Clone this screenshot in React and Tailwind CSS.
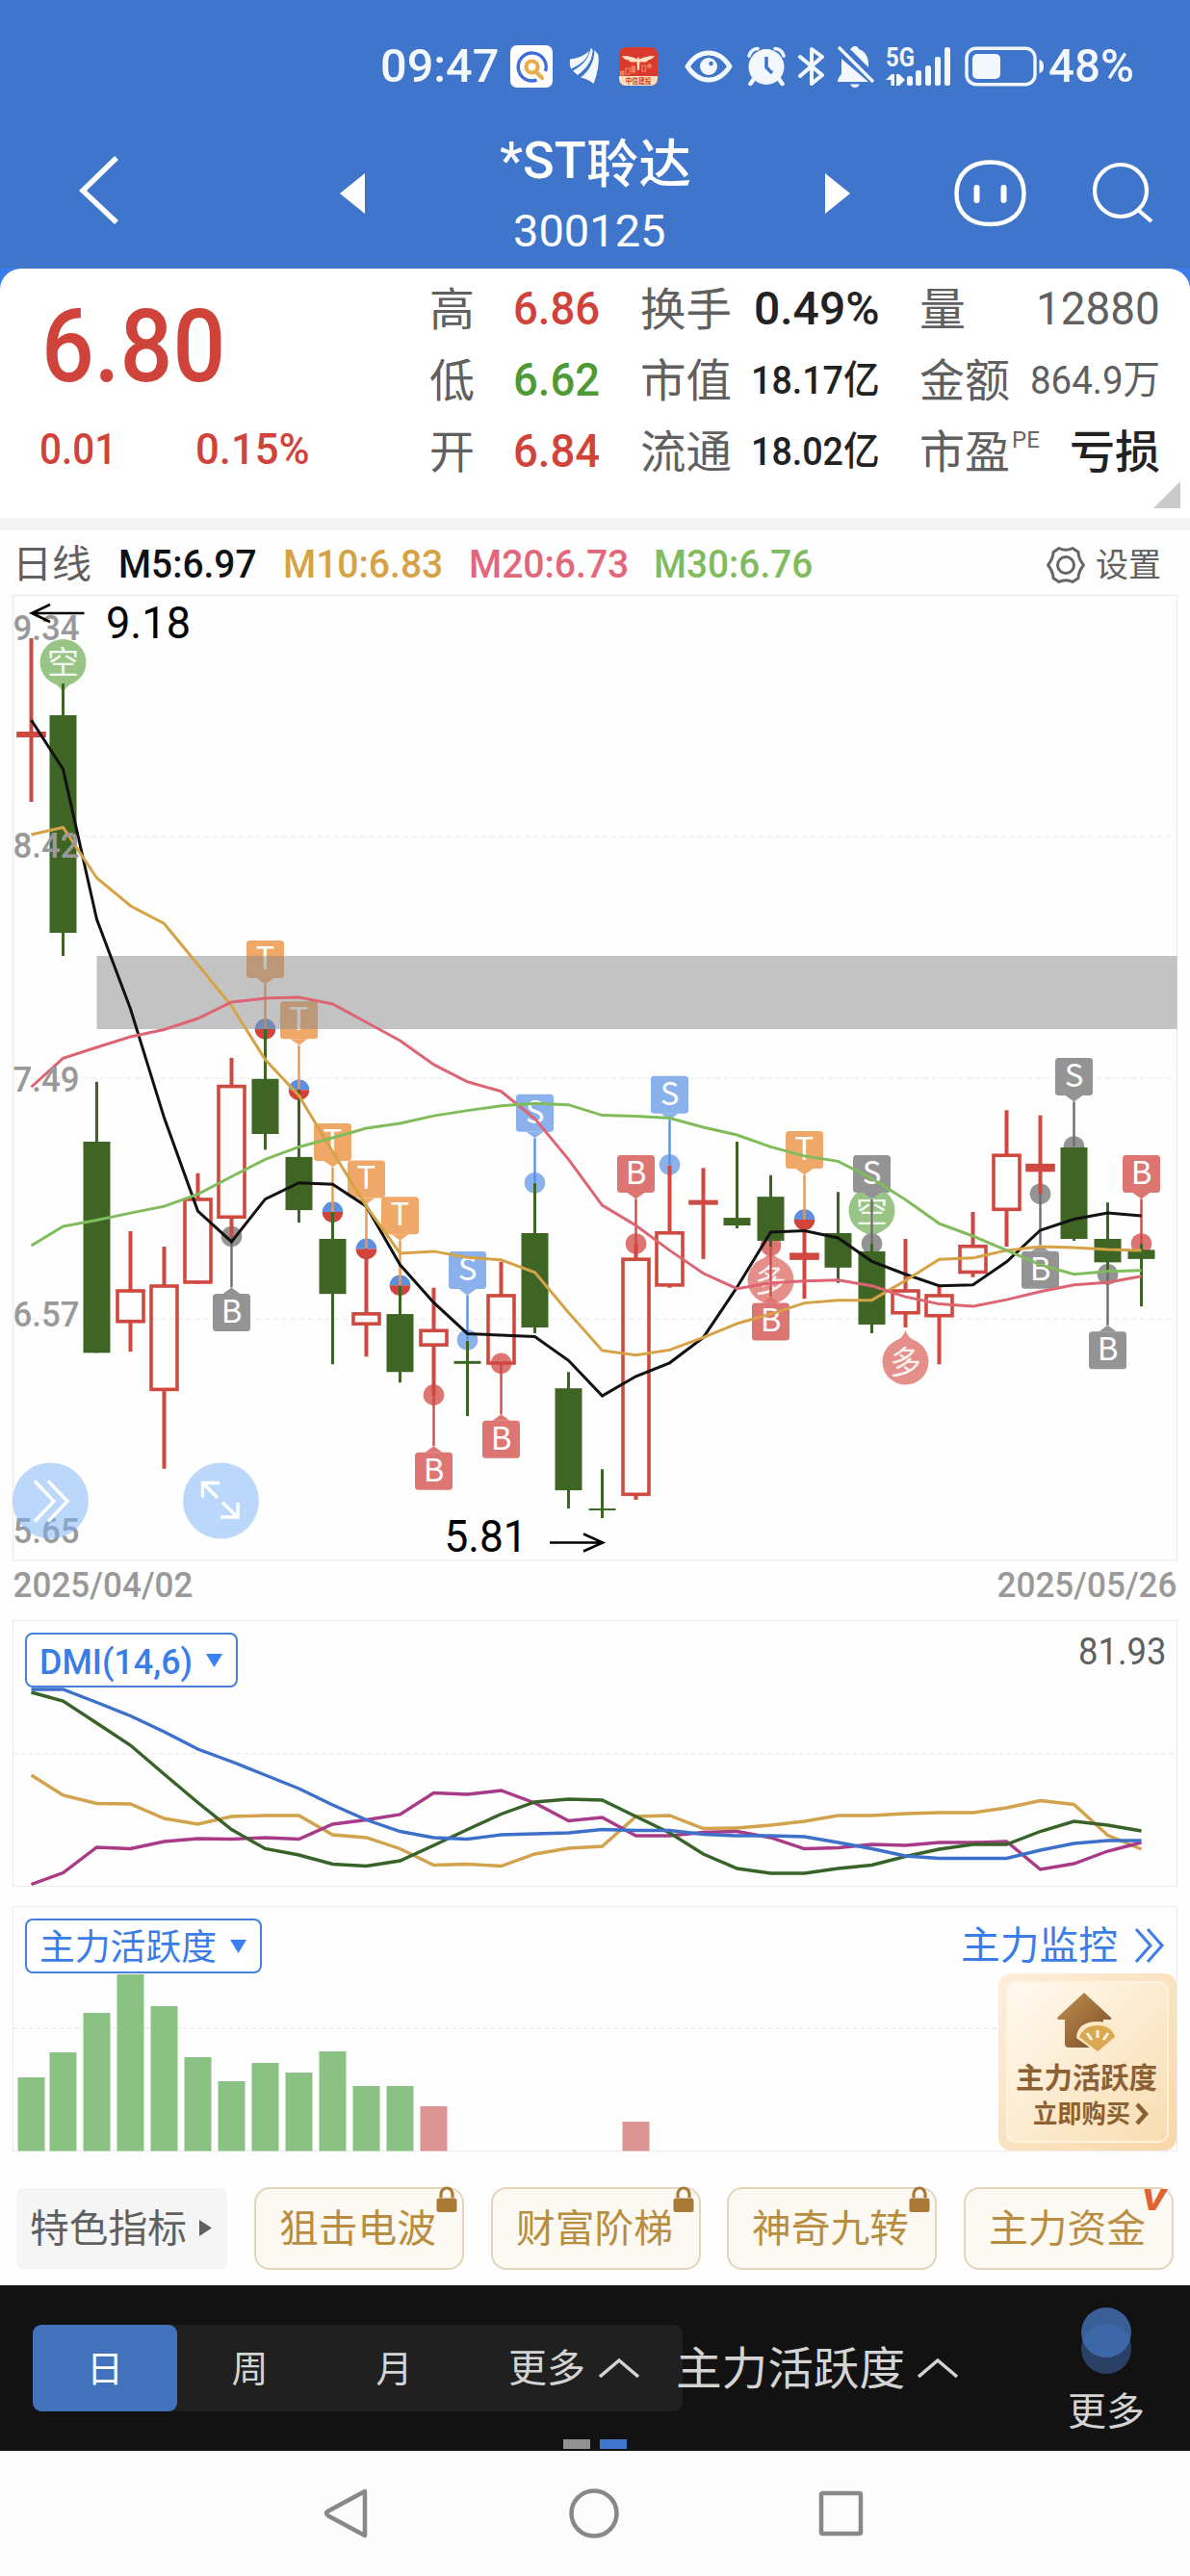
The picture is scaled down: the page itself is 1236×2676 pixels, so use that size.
import React, { useLayoutEffect, useRef, useState } from "react";

const FONT = "font-['Roboto','Noto_Sans_CJK_SC',sans-serif]";

// Text squeezed or stretched horizontally to an exact advance width.
function Fit({ w, className = "", children }) {
  const ref = useRef(null);
  const [k, setK] = useState(1);
  useLayoutEffect(() => {
    const measure = () => ref.current && setK(w / ref.current.offsetWidth);
    measure();
    document.fonts?.ready.then(measure);
  }, [w, children]);
  return (
    <span className={`inline-block shrink-0 whitespace-nowrap text-left leading-none ${className}`} style={{ width: w }}>
      <span ref={ref} className="inline-block origin-left" style={{ transform: `scaleX(${k})` }}>
        {children}
      </span>
    </span>
  );
}

/* ---------- status bar ---------- */

function StatusBar() {
  return (
    <div className="flex h-[137px] items-center pl-[395px] text-[#f3f8ff]">
      <Fit w={123} className="text-[49px] font-medium">09:47</Fit>
      <svg className="ml-[12px] shrink-0" width="44" height="44" viewBox="0 0 44 44">
        <rect width="44" height="44" rx="7" fill="#fff" />
        <path d="M36.5 27 A14.5 14.5 0 1 0 27.5 36.2" fill="none" stroke="#3f6bdc" strokeWidth="3.4" />
        <circle cx="22.5" cy="22.5" r="6" fill="none" stroke="#e8ac4d" strokeWidth="4.2" />
        <path d="M26 27 L33 34" stroke="#e8ac4d" strokeWidth="4.2" strokeLinecap="round" />
      </svg>
      <svg className="ml-[17px] shrink-0" width="33" height="38" viewBox="0 0 33 38" fill="currentColor">
        <path d="M1 11.5 Q13 10.5 21 3 Q19 14 2 21.500 Q0 16 1 11.500 Z" />
        <path d="M22.500 0.500 L24.500 1 Q25 16 9 28 L4 23.500 Q20 15 22.500 0.500 Z" />
        <path d="M26.500 2 L30.500 7 Q32 20 25.500 37 Q20 32 12 30.500 Q26 20 26.500 2 Z" />
      </svg>
      <svg className="ml-[19px] shrink-0" width="40" height="40" viewBox="0 0 40 40">
        <rect width="40" height="40" rx="7" fill="#da3a2c" />
        <path d="M0 30 H40 V33 A7 7 0 0 1 33 40 H7 A7 7 0 0 1 0 33 Z" fill="#f8dfc0" />
        <path d="M3 9 Q14 9 18.500 12.500 L20 10 L21.500 12.500 Q27 9 37 9 Q34 13 30 13.500 Q29 16.500 21.500 15 L20.800 24 H19.200 L18.500 15 Q11 16.500 10 13.500 Q5 13 3 9 Z" fill="#fbe3c3" />
        <g fill="none" stroke="#ee7f62" strokeWidth="1.200"><rect x="7" y="22" width="4" height="6" /><rect x="13" y="20" width="3.500" height="6" fill="#ee7f62" /><rect x="24" y="19" width="3.500" height="6" /><rect x="1.500" y="25" width="3.500" height="4" fill="#ee7f62" /><rect x="30" y="18" width="3" height="3" fill="#ee7f62" /></g>
        <text x="6.500" y="37.500" fontSize="7.500" fontWeight="700" fill="#c8432f" textLength="27" lengthAdjust="spacingAndGlyphs">中信建投</text>
      </svg>
      <svg className="ml-[28px] shrink-0" width="50" height="34" viewBox="0 0 50 34">
        <path d="M3 17 Q12 3 25 3 Q38 3 47 17 Q38 31 25 31 Q12 31 3 17 Z" fill="none" stroke="currentColor" strokeWidth="5" strokeLinejoin="round" />
        <circle cx="25" cy="17" r="9" fill="currentColor" /><circle cx="27.5" cy="14" r="2.2" fill="#3f76cb" />
      </svg>
      <svg className="ml-[14px] shrink-0" width="42" height="42" viewBox="0 0 42 42">
        <circle cx="21" cy="21.500" r="18.500" fill="currentColor" />
        <path d="M3 10 Q5 3 12 2.500 M39 10 Q37 3 30 2.500" fill="none" stroke="currentColor" strokeWidth="3.500" strokeLinecap="round" />
        <path d="M8 34 L4.500 39 M34 34 L37.500 39" stroke="currentColor" strokeWidth="4.500" strokeLinecap="round" />
        <path d="M21 11 V22 L27 28" fill="none" stroke="#3f76cb" strokeWidth="3.600" />
      </svg>
      <svg className="ml-[12px] shrink-0" width="28" height="42" viewBox="0 0 28 42">
        <path d="M2 11 L25 30 L14 39 V3 L25 11 L2 31" fill="none" stroke="currentColor" strokeWidth="4" strokeLinejoin="round" strokeLinecap="round" />
      </svg>
      <svg className="ml-[11px] shrink-0" width="42" height="44" viewBox="0 0 42 44">
        <path d="M15 5 Q17 1 20 1 Q23 1 24 4 Q33 7 34 18 V23 L16 5 Z M6 14 L34 38 H2 Q2 34 6 30 Z" fill="currentColor" />
        <path d="M15 40.500 H25 Q23 44 20 44 Q17 44 15 40.500 Z" fill="currentColor" />
        <path d="M3 2 L39 38" stroke="currentColor" strokeWidth="3.200" />
      </svg>
      <svg className="ml-[9px] shrink-0 overflow-visible" width="69" height="42" viewBox="0 0 69 42" fill="currentColor">
        <text x="1" y="20.500" fontSize="27" fontWeight="700" textLength="30" lengthAdjust="spacingAndGlyphs">5G</text>
        <path d="M7 29 H10 V41 H6.500 V35 H1 Z M12 29 H15 L21 35 L15 41 H12 Z" />
        {[[23, 31, 10], [32, 25, 16], [42, 20, 21], [52, 11, 30], [62, 1, 40]].map(([x, y, h]) => (
          <rect key={x} x={x} y={y} width="6" height={h} rx="2.500" />
        ))}
      </svg>
      <svg className="ml-[14px] shrink-0" width="84" height="42" viewBox="0 0 84 42" fill="currentColor">
        <rect x="2" y="2.200" width="71" height="37.500" rx="10" fill="none" stroke="currentColor" strokeWidth="3.400" />
        <rect x="8" y="8" width="29" height="26" rx="5" />
        <path d="M77.500 14 Q82 15 82 21 Q82 27 77.500 28 Z" />
      </svg>
      <Fit w={89} className="ml-[3px] text-[49px] font-medium">48%</Fit>
    </div>
  );
}

function TitleBar() {
  return (
    <div className="flex h-[142px] items-start text-white">
      <svg className="ml-[80px] mt-[24px] shrink-0" width="45" height="72" viewBox="0 0 45 72">
        <path d="M41 3 L6 37 L41 70" fill="none" stroke="#fff" strokeWidth="5.500" />
      </svg>
      <svg className="ml-[228px] mt-[43px] shrink-0" width="26" height="42" viewBox="0 0 26 42"><path d="M26 0 V42 L0 21 Z" fill="#fff" /></svg>
      <div className="ml-[137px] flex w-[208px] flex-col items-start">
        <div className="mt-[2px] flex h-[56px] items-center text-[54px] font-medium">
          <Fit w={90} className="ml-[3px]">*ST</Fit>
          <Fit w={109} className="font-['Noto_Sans_CJK_SC']">聆达</Fit>
        </div>
        <div className="mt-[20px] flex h-[48px] items-center pl-[17px] text-[47px]">
          <Fit w={159}>300125</Fit>
        </div>
      </div>
      <svg className="ml-[133px] mt-[43px] shrink-0" width="26" height="42" viewBox="0 0 26 42"><path d="M0 0 V42 L26 21 Z" fill="#fff" /></svg>
      <svg className="ml-[107px] mt-[28px] shrink-0" width="77" height="72" viewBox="0 0 77 72">
        <path d="M38.500 3.500 C60 3.500 73.500 16 73.500 36 C73.500 56 60 68 38.500 68 C17 68 3.500 56 3.500 36 C3.500 16 17 3.500 38.500 3.500 Z" fill="none" stroke="#fff" strokeWidth="4.500" />
        <path d="M24.500 30 V43 M52.500 30 V43" stroke="#fff" strokeWidth="6" strokeLinecap="round" />
      </svg>
      <svg className="ml-[68px] mt-[30px] shrink-0" width="66" height="68" viewBox="0 0 66 68">
        <circle cx="29" cy="31" r="27" fill="none" stroke="#fff" strokeWidth="4.200" />
        <path d="M47 51 L61 63" stroke="#fff" strokeWidth="4.200" />
      </svg>
    </div>
  );
}

/* ---------- quote ---------- */

const RED = "text-[#d0433b]";
const ROWS = [
  { a: "高", av: "6.86", ac: RED, b: "换手", bv: "0.49%", bs: "text-[48px]", bw: 131, c: "量", cw: 48, cv: "12880", cs: "text-[48px] font-normal text-[#606060]", cvw: 129 },
  { a: "低", av: "6.62", ac: "text-[#4f9a35]", b: "市值", bv: "18.17亿", bs: "text-[41px]", bw: 134, c: "金额", cw: 94, cv: "864.9万", cs: "text-[41px] font-normal text-[#606060]", cvw: 135 },
  { a: "开", av: "6.84", ac: RED, b: "流通", bv: "18.02亿", bs: "text-[41px]", bw: 134, c: "市盈", cw: 94, pe: true, cv: "亏损", cs: "text-[47px] text-[#222]", cvw: 94 },
];

function Quote() {
  return (
    <section className="bg-[#3a7bf0]">
      <div className="relative flex h-[259px] rounded-t-[22px] bg-white">
        <div className={`w-[446px] ${RED}`}>
          <div className="mt-[44px] flex h-[74px] items-center pl-[43px] text-[105px] font-medium">
            <Fit w={191}>6.80</Fit>
          </div>
          <div className="mt-[52px] flex h-[36px] items-center pl-[41px] text-[44px] font-medium">
            <Fit w={80}>0.01</Fit>
            <Fit w={119} className="ml-[82px]">0.15%</Fit>
          </div>
        </div>
        <div className="mt-[5px] flex flex-1 flex-col">
          {ROWS.map((r) => (
            <div key={r.a} className="flex h-[74px] items-center pr-[31px] text-[47px] font-medium text-[#222]">
              <Fit w={47} className="font-normal text-[#606060]">{r.a}</Fit>
              <Fit w={90} className={`ml-[40px] text-[48px] ${r.ac}`}>{r.av}</Fit>
              <Fit w={95} className="ml-[42px] font-normal text-[#606060]">{r.b}</Fit>
              <div className="flex w-[154px] justify-end"><Fit w={r.bw} className={r.bs}>{r.bv}</Fit></div>
              <Fit w={r.cw} className="ml-[41px] font-normal text-[#606060]">{r.c}</Fit>
              {r.pe && <Fit w={29} className="mb-[24px] ml-[2px] text-[24px] font-normal text-[#666]">PE</Fit>}
              <div className="flex flex-1 justify-end"><Fit w={r.cvw} className={r.cs}>{r.cv}</Fit></div>
            </div>
          ))}
        </div>
        <svg className="absolute bottom-[10px] right-[10px]" width="28" height="28" viewBox="0 0 28 28"><path d="M28 0 V28 H0 Z" fill="#cacaca" /></svg>
      </div>
    </section>
  );
}

function Legend() {
  return (
    <div className="flex h-[61px] items-center pt-[10px] text-[40px] font-medium">
      <Fit w={82} className="ml-[13px] text-[40px] font-normal text-[#606060]">日线</Fit>
      <Fit w={144} className="ml-[28px] text-[#111]">M5:6.97</Fit>
      <Fit w={166} className="ml-[27px] text-[#d6a246]">M10:6.83</Fit>
      <Fit w={166} className="ml-[27px] text-[#e0687a]">M20:6.73</Fit>
      <Fit w={165} className="ml-[26px] text-[#82bb5e]">M30:6.76</Fit>
      <svg className="ml-[242px] shrink-0" width="42" height="42" viewBox="0 0 42 42" fill="none" stroke="#666" strokeWidth="3">
        <path d="M14 3.500 Q21 7 28 3.500 L34 7.500 Q34 14 39.500 21 Q34 28 34 34.500 L28 38.500 Q21 35 14 38.500 L8 34.500 Q8 28 2.500 21 Q8 14 8 7.500 Z" strokeLinejoin="round" />
        <circle cx="21" cy="21" r="8.500" />
      </svg>
      <Fit w={68} className="ml-[10px] text-[34px] font-normal text-[#606060]">设置</Fit>
    </div>
  );
}

/* ---------- candlestick chart ---------- */

const px = (i) => (i === 0 ? 32.5 : 30.5 + 35 * i);
const py = (y) => (y > 1080 ? 1080 + (y - 1080) * 0.995 : y);
const line = (ys) => ys.map((y, i) => `${px(i)},${y}`).join(" ");
const priceLine = (ys) => line(ys.map(py));

// [kind, high, bodyTop, bodyBottom, low]; r = hollow red, R = flat red, g = filled green
const CANDLES = [
  ["R", 663, 760, 766, 833], ["g", 710, 743, 969, 993], ["g", 1124, 1186.5, 1407, 1407], ["r", 1280, 1340.5, 1376, 1406],
  ["r", 1296, 1335.5, 1447, 1528], ["r", 1219.5, 1245, 1335, 1335], ["r", 1099, 1127, 1267, 1286], ["g", 1069, 1121, 1178.5, 1195],
  ["g", 1132, 1202.5, 1258, 1271], ["g", 1260, 1288, 1345.5, 1419], ["r", 1298, 1364.5, 1378.5, 1411], ["g", 1337, 1366.5, 1427, 1438],
  ["r", 1339, 1382, 1400.5, 1451.5], ["g", 1394.5, 1415.5, 1418.5, 1473], ["r", 1312, 1345.5, 1419.5, 1419.5], ["g", 1230, 1282, 1380.5, 1386.5],
  ["g", 1427, 1444, 1550.5, 1569.5], ["g", 1528.5, 1569.5, 1571.5, 1579.5], ["r", 1293, 1307.5, 1556.5, 1560.5], ["r", 1211.5, 1280, 1338, 1339],
  ["R", 1214, 1247.5, 1252.5, 1309], ["g", 1186.5, 1266, 1274, 1277], ["g", 1221.5, 1244, 1290, 1296], ["R", 1268, 1302.5, 1310, 1350.5],
  ["g", 1239, 1282, 1318, 1334], ["g", 1293, 1301, 1377.5, 1386.5], ["r", 1288, 1340.5, 1367, 1380.5], ["r", 1338, 1345.5, 1370, 1419],
  ["r", 1260, 1294, 1324.5, 1328], ["r", 1153.5, 1199, 1259, 1296], ["R", 1159, 1209.5, 1218, 1241], ["g", 1192.5, 1192.5, 1288, 1290],
  ["g", 1250, 1288, 1312.5, 1324.5], ["g", 1293, 1299.5, 1309, 1358.5],
];

const M5 = [748, 799, 955, 1048, 1161.5, 1259, 1291, 1246.5, 1229.5, 1231, 1254, 1315, 1354.5, 1387, 1388.5, 1390, 1415, 1452, 1431.5, 1417.5, 1391, 1338.5, 1281, 1279.5, 1287, 1311.5, 1325, 1337, 1336, 1312, 1279, 1267.5, 1261, 1264];
const M10 = [867, 859.5, 912, 941, 959.5, 1002, 1045, 1101, 1138.5, 1197, 1254, 1303, 1301, 1307.5, 1310, 1323, 1365, 1404.5, 1409.5, 1404, 1391, 1376.5, 1366.5, 1355, 1352, 1352, 1331.5, 1309.5, 1308, 1300, 1296, 1297, 1299, 1300];
const M20 = [1129.5, 1099.5, 1088, 1077, 1069.5, 1058, 1041, 1037, 1036, 1043, 1062, 1081, 1106, 1124, 1134, 1162.5, 1205, 1253, 1274, 1300, 1324, 1340, 1334, 1332, 1331, 1337, 1348.5, 1356, 1358.5, 1351.5, 1343, 1336, 1333.5, 1327];
const M30 = [1295, 1275, 1268.5, 1261, 1254, 1241.5, 1223, 1205, 1192, 1182.5, 1172.5, 1167.5, 1159.5, 1154, 1149, 1146.5, 1148, 1159, 1160, 1162, 1171.5, 1179.5, 1192, 1201.5, 1207, 1225, 1247, 1272, 1285, 1300, 1315, 1325, 1322, 1321];

const TONE = {
  orange: ["#f0a868", "#e39a5b"],
  blue: ["#8ab1ec", "#5a91e3"],
  red: ["#dd7673", "#cb4c46"],
  gray: ["#949494", "#6c6c6c"],
};

// [index, letter, tone, dotY, above]
const MARKS = [
  [6, "B", "gray", 1285.5, false], [7, "T", "orange", 1069, true], [8, "T", "orange", 1132.5, true], [9, "T", "orange", 1260, true],
  [10, "T", "orange", 1298.5, true], [11, "T", "orange", 1336.5, true], [12, "B", "red", 1451, false], [13, "S", "blue", 1393.5, true],
  [14, "B", "red", 1418, false], [15, "S", "blue", 1229.5, true], [18, "B", "red", 1293, true], [19, "S", "blue", 1210.5, true],
  [22, "B", "red", 1295, false], [23, "T", "orange", 1268, true], [25, "S", "gray", 1293, true], [30, "B", "gray", 1241, false],
  [31, "S", "gray", 1191.5, true], [32, "B", "gray", 1325, false], [33, "B", "red", 1293, true],
];

function Mark({ i, letter, tone, y, above }) {
  const x = px(i);
  const [fill, stem] = TONE[tone];
  const top = above ? y - 92 : y + 59.5;
  const edge = above ? top + 39 : top;
  const tip = above ? edge + 6.5 : edge - 6.5;
  return (
    <g>
      {letter === "T" ? (
        <>
          <path d={`M${x - 10.8} ${y} A10.800 10.800 0 0 1 ${x + 10.8} ${y} Z`} fill="#5c8fe0" />
          <path d={`M${x - 10.8} ${y} A10.800 10.800 0 0 0 ${x + 10.8} ${y} Z`} fill="#d2433b" />
        </>
      ) : (
        <circle cx={x} cy={y} r="10.800" fill={fill} />
      )}
      <path d={`M${x} ${y} V${tip}`} stroke={stem} strokeWidth="2.400" />
      <rect x={x - 19.5} y={top} width="39" height="39" rx="3.500" fill={fill} />
      <path d={`M${x - 9} ${edge} H${x + 9} L${x} ${tip} Z`} fill={fill} />
      <text x={x} y={top + 30} fontSize="33" fill="#fff" textAnchor="middle" className="font-['Noto_Sans_CJK_SC']">{letter}</text>
    </g>
  );
}

function Drop({ x, y, fill, tail, char }) {
  const s = tail === "down" ? 1 : -1;
  return (
    <g>
      <circle cx={x} cy={y} r="24" fill={fill} />
      <path d={`M${x - 11} ${y + s * 21} Q${x - 2} ${y + s * 25} ${x} ${y + s * 33} Q${x + 2} ${y + s * 25} ${x + 11} ${y + s * 21} Z`} fill={fill} />
      <text x={x} y={y + 12} fontSize="33" fill="#fff" fillOpacity=".9" textAnchor="middle" className="font-['Noto_Sans_CJK_SC']">{char}</text>
    </g>
  );
}

function Candle({ i, d: [kind, ...levels] }) {
  const x = px(i);
  const [hi, top, bottom, lo] = levels.map(py);
  if (kind === "g")
    return (
      <g fill="#3e6523">
        <rect x={x - 1.5} y={hi} width="3" height={lo - hi} />
        <rect x={x - 14} y={top} width="28" height={bottom - top} />
      </g>
    );
  if (kind === "R")
    return (
      <g fill="#cf4940">
        <rect x={x - 2} y={hi} width="4" height={lo - hi} />
        <rect x={x - 15.3} y={top} width="30.600" height={bottom - top} />
      </g>
    );
  return (
    <g>
      <path d={`M${x} ${hi} V${top + 2} M${x} ${bottom - 2} V${lo}`} stroke="#cf4940" strokeWidth="4" />
      <rect x={x - 13.5} y={top + 1.8} width="27" height={bottom - top - 3.6} fill="none" stroke="#cf4940" strokeWidth="3.600" />
    </g>
  );
}

function AxisLabel({ x = 13.5, y, w = 69, children }) {
  return <text x={x} y={y} fontSize="37" fontWeight="500" fill="#999" textLength={w} lengthAdjust="spacingAndGlyphs">{children}</text>;
}

function KLine() {
  return (
    <svg className="block" width="1236" height="1064" viewBox="0 612 1236 1064">
      <rect x="13.500" y="618.500" width="1209" height="1002.500" fill="none" stroke="#ebebeb" strokeWidth="1.200" />
      {[869, 1120, 1370.5].map((y) => (
        <path key={y} d={`M14 ${y} H1222`} stroke="#f0f0f0" strokeWidth="1.500" strokeDasharray="5 4" />
      ))}
      <Drop x={65.5} y={688} fill="#98c585" tail="down" char="空" />
      <Drop x={905.5} y={1257.5} fill="#98c585" tail="down" char="空" />
      <Drop x={800.5} y={1330} fill="#e58f8b" tail="up" char="多" />
      <Drop x={940.5} y={1414.5} fill="#e58f8b" tail="up" char="多" />
      {MARKS.map(([i, letter, tone, y, above]) => <Mark key={i} i={i} letter={letter} tone={tone} y={py(y)} above={above} />)}
      {CANDLES.map((d, i) => <Candle key={i} i={i} d={d} />)}
      <rect x="100.500" y="993" width="1122" height="76" fill="#888" fillOpacity=".5" />
      <g fill="none" strokeWidth="3">
        <polyline points={priceLine(M5)} stroke="#111" />
        <polyline points={priceLine(M10)} stroke="#d6a246" />
        <polyline points={priceLine(M20)} stroke="#dd6573" />
        <polyline points={priceLine(M30)} stroke="#80bb5c" />
      </g>
      <AxisLabel y={664.5}>9.34</AxisLabel>
      <AxisLabel y={890.5}>8.42</AxisLabel>
      <AxisLabel y={1133.5}>7.49</AxisLabel>
      <AxisLabel y={1377.5}>6.57</AxisLabel>
      <AxisLabel y={1603}>5.65</AxisLabel>
      <g fill="none" stroke="#000" strokeWidth="2.600">
        <path d="M33 637 H87.500 M52 628 L33 637 L52 646" />
        <path d="M571 1602.500 H626 M606 1593.500 L626 1602.500 L606 1611.500" />
      </g>
      <g fontSize="46" fill="#000">
        <text x="110" y="662.500" textLength="88" lengthAdjust="spacingAndGlyphs">9.18</text>
        <text x="461.500" y="1611.500" textLength="86" lengthAdjust="spacingAndGlyphs">5.81</text>
      </g>
      <g fill="#78b1f7" fillOpacity=".5">
        <circle cx="52.500" cy="1559" r="39.500" />
        <circle cx="229.500" cy="1559" r="39.500" />
      </g>
      <g fill="none" stroke="#fff" strokeWidth="3.400">
        <path d="M36 1538.500 L56 1559.500 L36 1580.500 M50 1538.500 L70 1559.500 L50 1580.500" />
        <path d="M210.500 1555.500 V1540.500 H228 M211 1541 L226 1556 M247 1561 V1576 H229 M246 1575.500 L231 1560.500" />
      </g>
      <AxisLabel y={1659} w={187}>2025/04/02</AxisLabel>
      <AxisLabel x={1035.5} y={1659} w={187}>2025/05/26</AxisLabel>
    </svg>
  );
}

/* ---------- indicators ---------- */

const DMI = [
  ["#d2a24c", [1844, 1865, 1873.5, 1874, 1889, 1895, 1887, 1886, 1886, 1906, 1909, 1920.5, 1937.5, 1936.5, 1938.5, 1926, 1920, 1918, 1887, 1886, 1899.5, 1899, 1896, 1892, 1886, 1886, 1884, 1883, 1883, 1878, 1870.5, 1874.5, 1906.5, 1921]],
  ["#a93a87", [1957.5, 1945.5, 1919, 1920.5, 1913, 1910, 1910.5, 1909, 1910.5, 1895, 1890.5, 1885, 1862.5, 1864, 1860, 1873, 1891.5, 1888, 1907, 1907, 1903.5, 1902.5, 1909, 1920.5, 1919.5, 1916, 1917, 1914, 1914, 1913, 1942, 1936, 1923, 1914]],
  ["#376328", [1758, 1767, 1790, 1813, 1843, 1872.5, 1900.5, 1920.5, 1927, 1936.5, 1938.5, 1933, 1917, 1900.5, 1884.5, 1872, 1869, 1870, 1887, 1904, 1926, 1941, 1946, 1946, 1941, 1937.5, 1928.5, 1921, 1916, 1916, 1902.5, 1892, 1896, 1902]],
  ["#3d70cb", [1755, 1755, 1768.5, 1782.5, 1799, 1817, 1830, 1844, 1858, 1875, 1890.5, 1902.5, 1909, 1910.5, 1906, 1905, 1904, 1900.5, 1901.5, 1901.5, 1905.5, 1907, 1907, 1908, 1914, 1920.5, 1928, 1930.5, 1930.5, 1930.5, 1922, 1915, 1912, 1912]],
];

function Picker({ children, w, tw }) {
  return (
    <button className="absolute left-[12px] top-[12px] flex h-[57px] items-center rounded-[8px] border-2 border-[#4480dc] bg-white pl-[13px] text-[37px] text-[#3b7de6]" style={{ width: w }}>
      <Fit w={tw} className="mt-[3px]">{children}</Fit>
      <svg className="ml-[14px] shrink-0" width="17" height="16" viewBox="0 0 17 16"><path d="M0 1 H17 L8.500 15 Z" fill="#3a80f2" /></svg>
    </button>
  );
}

function DmiPanel() {
  return (
    <section className="relative mx-[13px] mt-[7px] h-[277px] w-[1210px] border border-[#ebebeb]">
      <svg className="block" width="1208" height="275" viewBox="14 1684 1208 275">
        <path d="M14 1821.500 H1222" stroke="#ebebeb" strokeWidth="1.200" strokeDasharray="5 3" />
        {DMI.map(([c, ys]) => <polyline key={c} points={line(ys)} fill="none" stroke={c} strokeWidth="3.400" />)}
      </svg>
      <Picker w={221} tw={159}><span className="font-medium">DMI(14,6)</span></Picker>
      <div className="absolute right-[11px] top-[13px] flex text-[38px] text-[#606060]"><Fit w={91}>81.93</Fit></div>
    </section>
  );
}

const BARS = [2158, 2132, 2091, 2051, 2084, 2137, 2162, 2143, 2153, 2131, 2167, 2167, 2188, 0, 0, 0, 0, 0, 2204];

function ActivityPanel() {
  return (
    <section className="relative mx-[13px] mt-[20px] h-[255px] w-[1210px] border border-[#ebebeb]">
      <svg className="block overflow-visible" width="1208" height="253" viewBox="14 1981 1208 253">
        <path d="M14 2107 H1222" stroke="#f0f0f0" strokeWidth="1.800" strokeDasharray="5 3" />
        {BARS.map((y, i) => y > 0 && <rect key={i} x={px(i) - 14} y={y} width="28" height={2234.5 - y} fill={i >= 12 ? "#dd9594" : "#8ac283"} />)}
      </svg>
      <Picker w={246} tw={184}>主力活跃度</Picker>
      <div className="absolute right-[12px] top-[18px] flex items-center text-[40px] text-[#3b7de6]">
        <Fit w={163} className="mt-[3px]">主力监控</Fit>
        <svg className="ml-[17px]" width="32" height="38" viewBox="0 0 32 38" fill="none" stroke="#3b7de6" strokeWidth="3"><path d="M2 2 L17 19 L2 36 M14 2 L29 19 L14 36" /></svg>
      </div>
      <div className="absolute bottom-0 right-0 h-[184px] w-[185px] rounded-[13px] bg-linear-to-br from-[#fdeedb] to-[#f8d7a6] p-[8px] text-[#8b6134]">
        <div className="flex h-full flex-col items-center rounded-[10px] border-2 border-[#fff3de] bg-linear-to-br from-[#fffaf0] to-[#f9dcb0] pr-[3px] pt-[9px] font-bold">
          <svg width="62" height="64" viewBox="0 0 62 64">
            <defs>
              <linearGradient id="house" x1="0" y1="0" x2="1" y2="1"><stop offset="0" stopColor="#c1904f" /><stop offset="1" stopColor="#7a4d28" /></linearGradient>
            </defs>
            <path d="M29 1 L57 27 Q58 29 55 29 H49 V52 Q49 58 44 58 H13 Q9 58 9 54 V29 H3 Q0 29 2 26 Z" fill="url(#house)" />
            <path d="M43 64 L21 48 Q22 31 43 31 Q62 31 64 48 Z" fill="#fbe8c8" />
            <path d="M43 62 L24 47 Q29 35 43 35 Q57 35 61 47 Z" fill="#d9a850" />
            <path d="M43 40 V48 M32 43 L37 50 M54 43 L49 50" stroke="#fff6e2" strokeWidth="3" />
          </svg>
          <Fit w={147} className="mt-[11px] text-[30px]">主力活跃度</Fit>
          <div className="ml-[10px] mt-[9px] flex items-center text-[26px]">
            <Fit w={101}>立即购买</Fit>
            <svg className="ml-[5px]" width="15" height="24" viewBox="0 0 15 24"><path d="M2 2 L11 12 L2 22" fill="none" stroke="#8b6134" strokeWidth="4.500" /></svg>
          </div>
        </div>
      </div>
    </section>
  );
}

function Tags() {
  return (
    <div className="mt-[36px] flex h-[87px] items-center text-[40px]">
      <div className="ml-[17px] flex h-[84px] w-[219px] items-center rounded-[7px] bg-[#f5f5f5] pl-[14px] text-[#606060]">
        <Fit w={163} className="mt-[2px]">特色指标</Fit>
        <svg className="ml-[13px]" width="13" height="17" viewBox="0 0 13 17"><path d="M0 0 L13 8.500 L0 17 Z" fill="#606060" /></svg>
      </div>
      <div className="ml-[28px] flex gap-[27.700px]">
        {["狙击电波", "财富阶梯", "神奇九转", "主力资金"].map((t) => (
          <div key={t} className="relative flex h-[86px] w-[218px] items-center justify-center rounded-[16px] border-2 border-[#e3d5bb] bg-[#fcf8f2] pr-[3px] text-[#b98d40]">
            <Fit w={163} className="mt-[2px]">{t}</Fit>
            {t === "主力资金" ? (
              <span className="absolute right-[6px] top-[-5px] text-[32px] font-black italic leading-none text-[#e06332]"><Fit w={25}>V</Fit></span>
            ) : (
              <svg className="absolute right-[5px] top-[-3px]" width="22" height="28" viewBox="0 0 22 28">
                <path d="M5 12 V8 A6 6 0 0 1 17 8 V12" fill="none" stroke="#a97a35" strokeWidth="3.200" />
                <rect x="0.500" y="12.500" width="21" height="14.500" rx="2.500" fill="#a97a35" />
              </svg>
            )}
          </div>
        ))}
      </div>
    </div>
  );
}

/* ---------- bottom ---------- */

function Caret() {
  return <svg className="shrink-0" width="44" height="22" viewBox="0 0 44 22"><path d="M2 20 L22 3 L42 20" fill="none" stroke="#d4d4d4" strokeWidth="3.600" /></svg>;
}

function BottomBar() {
  return (
    <div className="relative mt-[16px] flex h-[172px] bg-[#121212] text-[38px] text-[#d4d4d4]">
      <div className="ml-[34px] mt-[41px] flex h-[90px] w-[675px] shrink-0 items-center rounded-[9px] bg-[#202020]">
        <div className="flex h-full w-[150px] items-center justify-center rounded-[9px] bg-[#4272bb] pt-[2px] text-white">日</div>
        <div className="w-[151px] pt-[2px] text-center">周</div>
        <div className="w-[149px] pt-[2px] text-center">月</div>
        <div className="flex items-center pl-[44px]">
          <Fit w={80} className="mt-[1px] text-[40px]">更多</Fit>
          <span className="ml-[13px] flex"><Caret /></span>
        </div>
      </div>
      <div className="mt-[41px] ml-[-7px] flex h-[90px] items-center">
        <Fit w={238} className="text-[47px]">主力活跃度</Fit>
        <span className="ml-[12px] flex"><Caret /></span>
      </div>
      <div className="ml-[113px] flex flex-col items-center">
        <svg className="mt-[22px]" width="54" height="72" viewBox="0 0 54 72">
          <circle cx="27" cy="44" r="26" fill="#2a4165" />
          <circle cx="27" cy="27" r="26" fill="#3a5f97" />
          <path d="M2.500 35.500 A26 26 0 0 1 51.500 35.500 A26 26 0 0 1 2.500 35.500 Z" fill="#3c67a8" />
        </svg>
        <Fit w={80} className="mt-[18px] text-[40px]">更多</Fit>
      </div>
      <div className="absolute bottom-[2px] left-[585px] flex gap-[10px]">
        <div className="h-[10px] w-[28px] bg-[#919191]" />
        <div className="h-[10px] w-[28px] bg-[#3f76cb]" />
      </div>
    </div>
  );
}

function NavBar() {
  return (
    <div className="flex h-[130px] items-center bg-[#fcfcfc]">
      <svg className="ml-[335px]" width="48" height="54" viewBox="0 0 48 54"><path d="M44 4 V50 L6 29.500 Q2 27 6 24.500 Z" fill="none" stroke="#888" strokeWidth="4.500" strokeLinejoin="round" /></svg>
      <svg className="ml-[207px]" width="54" height="54" viewBox="0 0 54 54"><circle cx="27" cy="27" r="23.500" fill="none" stroke="#888" strokeWidth="4.500" /></svg>
      <svg className="ml-[203px]" width="54" height="54" viewBox="0 0 54 54"><rect x="6" y="6" width="41" height="42" rx="1.500" fill="none" stroke="#888" strokeWidth="4.500" /></svg>
    </div>
  );
}

export default function App() {
  return (
    <div className={`h-[2676px] w-[1236px] overflow-hidden bg-[#fefefe] ${FONT}`}>
      <header className="bg-[#3f76cb]">
        <StatusBar />
        <TitleBar />
      </header>
      <Quote />
      <div className="h-[13px] bg-[#f3f3f3]" />
      <Legend />
      <KLine />
      <DmiPanel />
      <ActivityPanel />
      <Tags />
      <BottomBar />
      <NavBar />
    </div>
  );
}
